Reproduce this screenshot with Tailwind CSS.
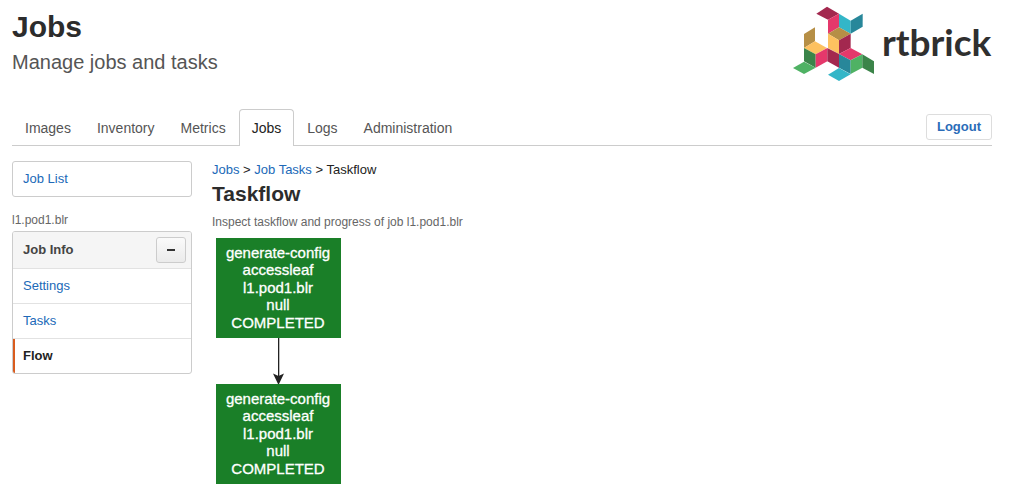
<!DOCTYPE html>
<html lang="en">
<head>
    <meta charset="UTF-8">
    <meta name="viewport" content="width=device-width, initial-scale=1.0">
    <title>Jobs - Taskflow</title>
    <script src="https://cdn.jsdelivr.net/npm/@tailwindcss/browser@4"></script>
</head>
<body class="bg-white pl-3 pr-7 text-[13px] leading-5 text-[#222] font-['Liberation_Sans',Arial,sans-serif]">
    <header class="flex justify-between items-start h-[109px]">
        <div class="pt-[9px]">
            <h1 class="text-[30px] leading-9 font-bold text-[#2c2c2c]">Jobs</h1>
            <p class="text-xl leading-[34px] text-[#555]">Manage jobs and tasks</p>
        </div>
        <a href="/" aria-label="rtbrick">
            <svg width="207" height="90" viewBox="0 0 207 90">
                <g transform="scale(0.3333)">
                    <path fill="#a3284f" d="M94 41 126 20 162 41 129 59z"/>
                    <path fill="#e5386b" d="M129 59 162 41V82L129 101z"/>
                    <path fill="#33b6c8" d="M162 41 197 62V101L162 82z"/>
                    <path fill="#28879a" d="M197 62 233 41V80L197 101z"/>
                    <path fill="#b68f46" d="M129 101 162 82 197 101 162 121z"/>
                    <path fill="#fdc160" d="M129 101 162 121V162L129 144z"/>
                    <path fill="#a3284f" d="M162 121 197 101V144L162 162z"/>
                    <path fill="#b68f46" d="M57 102 90 82V124L57 144z"/>
                    <path fill="#fdc160" d="M57 144 90 124 126 144 92 163z"/>
                    <path fill="#3b8449" d="M57 144 92 163V203L57 184z"/>
                    <path fill="#e5386b" d="M92 163 127 144V184L92 203z"/>
                    <path fill="#a3284f" d="M127 144 162 162V203L127 184z"/>
                    <path fill="#4fb264" d="M57 185 92 203 57 222 24 204z"/>
                    <path fill="#e5386b" d="M162 162 197 144 232 163 197 181z"/>
                    <path fill="#28879a" d="M162 162 197 181V222L162 203z"/>
                    <path fill="#4fb264" d="M197 181 232 163V203L197 222z"/>
                    <path fill="#3b8449" d="M232 163 267 184V222L232 203z"/>
                    <path fill="#33b6c8" d="M162 204 197 223 162 243 129 224z"/>
                </g>
                <text x="97" y="56" class="text-[37px] font-bold fill-[#2f2f2f] font-[Lato,sans-serif]">rtbrick</text>
            </svg>
        </a>
    </header>

    <nav class="flex items-end border-b border-[#ccc] text-sm text-[#555]">
        <a href="/images" class="px-[13px] pt-[9px] pb-[7px]">Images</a>
        <a href="/inventory" class="px-[13px] pt-[9px] pb-[7px]">Inventory</a>
        <a href="/metrics" class="px-[13px] pt-[9px] pb-[7px]">Metrics</a>
        <a href="/jobs" class="-mb-px px-3 py-2 border border-b-0 border-[#ccc] rounded-t bg-white text-[#222]">Jobs</a>
        <a href="/logs" class="px-[13px] pt-[9px] pb-[7px]">Logs</a>
        <a href="/admin" class="px-[13px] pt-[9px] pb-[7px]">Administration</a>
        <button type="button" class="ml-auto mb-[5px] px-[10px] h-[26px] border border-[#ddd] rounded-[3px] bg-white text-[13px] font-bold text-[#2b6cb8] cursor-pointer">Logout</button>
    </nav>

    <div class="flex gap-5 pt-[15px]">
        <aside class="w-[180px] shrink-0">
            <div class="border border-[#ccc] rounded-[3px] px-[10px] py-[7px]">
                <a href="/jobs" class="text-[#2069b8]">Job List</a>
            </div>
            <div class="mt-[13px] pb-px text-xs leading-5 text-[#666]">l1.pod1.blr</div>
            <div class="border border-[#ccc] rounded-[3px] overflow-hidden">
                <div class="flex items-center justify-between h-9 pl-[10px] pr-[5px] bg-[#f5f5f5] font-bold text-[#444]">
                    Job Info
                    <button type="button" aria-label="Collapse" class="w-[30px] h-[26px] flex items-center justify-center border border-[#ccc] rounded-[3px] bg-linear-to-b from-[#fafafa] to-[#ebebeb] cursor-pointer">
                        <span class="w-2 h-[2px] bg-[#333]"></span>
                    </button>
                </div>
                <a href="/jobs/settings" class="block h-[35px] border-t border-[#e2e2e2] px-[10px] py-[7px] text-[#2069b8]">Settings</a>
                <a href="/jobs/tasks" class="block h-[35px] border-t border-[#e2e2e2] px-[10px] py-[7px] text-[#2069b8]">Tasks</a>
                <div class="border-t border-[#e2e2e2]">
                    <a href="/jobs/flow" class="block h-[34px] border-l-2 border-[#d95c1e] px-2 py-[7px] font-bold">Flow</a>
                </div>
            </div>
        </aside>

        <main class="grow">
            <div class="leading-[18px]">
                <a href="/jobs" class="text-[#2069b8]">Jobs</a> &gt;
                <a href="/jobs/tasks" class="text-[#2069b8]">Job Tasks</a> &gt; Taskflow
            </div>
            <h2 class="pb-[3px] text-[21px] leading-[30px] font-bold text-[#2c2c2c]">Taskflow</h2>
            <p class="text-xs leading-5 text-[#666]">Inspect taskflow and progress of job l1.pod1.blr</p>
            <svg class="ml-1 mt-[6px] text-[15px] stroke-[0.3px]" width="125" height="246" viewBox="0 0 125 246" text-anchor="middle">
                <path d="M0 0H125V100H0z" fill="#1a7f28"/>
                <g fill="#fff" stroke="#fff">
                    <text x="62" y="20">generate-config</text>
                    <text x="62" y="37">accessleaf</text>
                    <text x="62" y="55">l1.pod1.blr</text>
                    <text x="62" y="72">null</text>
                    <text x="62" y="90">COMPLETED</text>
                </g>
                <path d="M62 100h1.3v38h-1.3z" fill="#222"/>
                <path d="M57 135.5 62.5 138 68 135.5 62.5 147z" fill="#222"/>
                <path d="M0 146H125V246H0z" fill="#1a7f28"/>
                <g fill="#fff" stroke="#fff">
                    <text x="62" y="166">generate-config</text>
                    <text x="62" y="183">accessleaf</text>
                    <text x="62" y="201">l1.pod1.blr</text>
                    <text x="62" y="218">null</text>
                    <text x="62" y="236">COMPLETED</text>
                </g>
            </svg>
        </main>
    </div>
</body>
</html>
